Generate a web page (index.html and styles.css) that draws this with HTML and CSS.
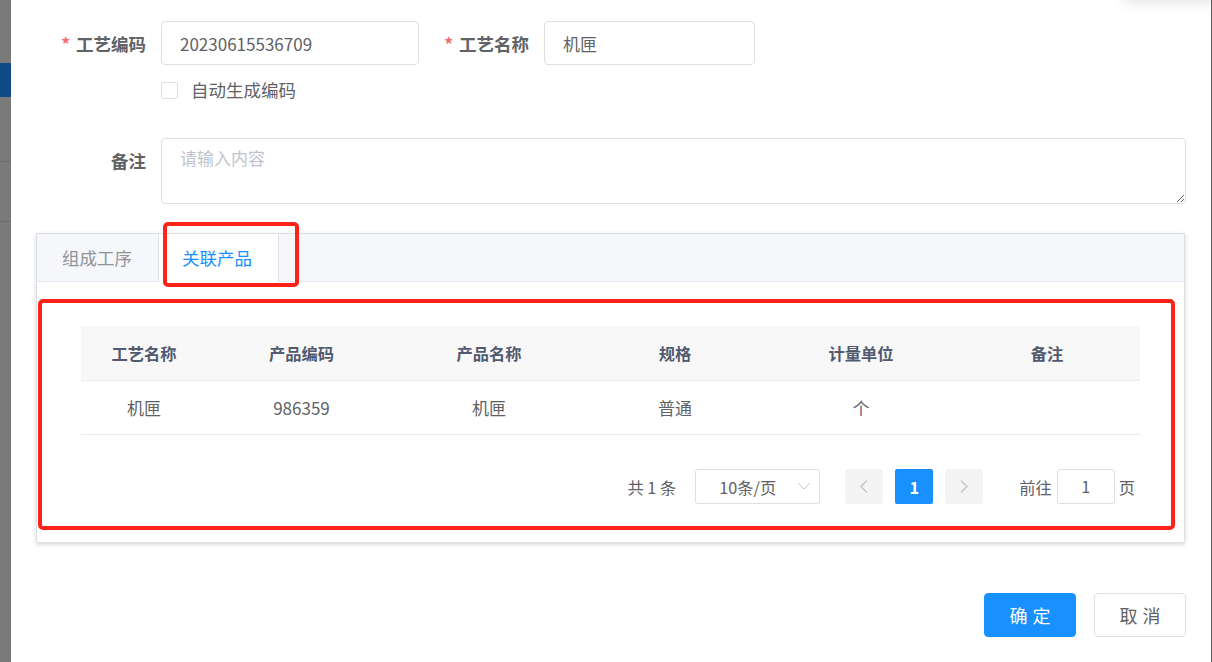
FILE: index.html
```html
<!DOCTYPE html>
<html lang="zh-CN">
<head>
<meta charset="utf-8">
<title>工艺</title>
<link rel="stylesheet" href="styles.css">
</head>
<body>
<div class="page">
  <aside class="backdrop">
    <div class="bd-top"></div>
    <div class="bd-active"></div>
    <div class="bd-mid"></div>
    <div class="bd-mid2"></div>
    <div class="bd-rest"></div>
  </aside>
  <main class="dialog">
    <div class="corner-shadow"></div>
    <div class="form">
      <div class="row row-top">
        <div class="item item-code">
          <label class="label"><span class="req">*</span>工艺编码</label>
          <div class="control">
            <div class="input input-code">20230615536709</div>
            <div class="checkbox-row"><span class="checkbox"></span><span class="checkbox-text">自动生成编码</span></div>
          </div>
        </div>
        <div class="item item-name">
          <label class="label"><span class="req">*</span>工艺名称</label>
          <div class="control">
            <div class="input input-name">机匣</div>
          </div>
        </div>
      </div>
      <div class="row row-remark">
        <label class="label">备注</label>
        <textarea class="textarea" placeholder="请输入内容"></textarea>
      </div>
    </div>

    <section class="tabs">
      <div class="tabs-header">
        <div class="tab">组成工序</div>
        <div class="tab active">关联产品</div>
      </div>
      <div class="tabs-body">
        <table class="grid">
          <colgroup>
            <col class="c1"><col class="c2"><col class="c3"><col class="c4"><col class="c5"><col class="c6">
          </colgroup>
          <thead>
            <tr><th>工艺名称</th><th>产品编码</th><th>产品名称</th><th>规格</th><th>计量单位</th><th>备注</th></tr>
          </thead>
          <tbody>
            <tr><td>机匣</td><td>986359</td><td>机匣</td><td>普通</td><td>个</td><td></td></tr>
          </tbody>
        </table>
        <div class="pager">
          <span class="pager-total">共 1 条</span>
          <div class="pager-size">
            <span>10条/页</span>
            <svg class="size-arrow" width="12" height="7" viewBox="0 0 12 7"><polyline points="0.5,0.5 6,6 11.5,0.5" fill="none" stroke="#c0c4cc" stroke-width="1"/></svg>
          </div>
          <button class="pg-btn" type="button"><svg width="8" height="13" viewBox="0 0 8 13"><polyline points="7,0.5 1,6.5 7,12.5" fill="none" stroke="#c0c4cc" stroke-width="1.4"/></svg></button>
          <button class="pg-num" type="button">1</button>
          <button class="pg-btn" type="button"><svg width="8" height="13" viewBox="0 0 8 13"><polyline points="1,0.5 7,6.5 1,12.5" fill="none" stroke="#c0c4cc" stroke-width="1.4"/></svg></button>
          <span class="pager-goto">前往</span>
          <div class="pager-input">1</div>
          <span class="pager-unit">页</span>
        </div>
      </div>
    </section>

    <div class="footer">
      <button class="btn btn-primary" type="button"><span>确定</span></button>
      <button class="btn" type="button"><span>取消</span></button>
    </div>

    <div class="mark mark-tab"></div>
    <div class="mark mark-table"></div>
  </main>
  <div class="edge"></div>
</div>
</body>
</html>
```

FILE: styles.css
```css
html, body {
  margin: 0;
  padding: 0;
}
body {
  width: 1212px;
  height: 662px;
  overflow: hidden;
  font-family: "Noto Sans CJK SC", "Noto Sans", sans-serif;
  color: #606266;
}
.page {
  display: flex;
  width: 1212px;
  height: 662px;
  background: #7a7a7a;
}

/* dimmed page behind the dialog */
.backdrop {
  width: 11px;
  flex: none;
  display: flex;
  flex-direction: column;
}
.bd-top { height: 63px; background: #7a7a7a; }
.bd-active { height: 34px; background: #0e4b84; }
.bd-mid { height: 64px; background: #7a7a7a; border-bottom: 1px solid #6d6d6d; }
.bd-mid2 { height: 59px; background: #7a7a7a; border-bottom: 1px solid #6d6d6d; }
.bd-rest { flex: 1; background: #7a7a7a; }
.edge {
  width: 1px;
  flex: none;
  background: #5e5e5e;
}

.dialog {
  position: relative;
  width: 1200px;
  flex: none;
  box-sizing: border-box;
  background: #fff;
  padding: 21px 25px 0 25px;
  overflow: hidden;
}
.corner-shadow {
  position: absolute;
  top: -30px;
  right: -4px;
  width: 90px;
  height: 30px;
  background: #fff;
  box-shadow: 0 2px 14px rgba(0, 0, 0, 0.13);
}

/* form */
.row {
  display: flex;
  align-items: flex-start;
}
.item {
  display: flex;
  align-items: flex-start;
}
.label {
  width: 125px;
  flex: none;
  box-sizing: border-box;
  padding-right: 15px;
  text-align: right;
  font-size: 17.5px;
  font-weight: bold;
  line-height: 46px;
  height: 44px;
  color: #606266;
}
.req {
  color: #f56c6c;
  margin-right: 6px;
  font-weight: bold;
}
.input {
  box-sizing: border-box;
  height: 44px;
  border: 1px solid #dcdfe6;
  border-radius: 4px;
  padding: 0 18px;
  font-size: 17px;
  line-height: 44px;
  color: #606266;
}
.input-code { width: 258px; }
.input-name { width: 211px; }
.checkbox-row {
  display: flex;
  align-items: center;
  margin-top: 17px;
  height: 17px;
}
.checkbox {
  box-sizing: border-box;
  width: 17px;
  height: 17px;
  border: 1px solid #dcdfe6;
  border-radius: 2px;
  background: #fff;
  margin-right: 13px;
}
.checkbox-text {
  font-size: 17.5px;
  line-height: 17px;
  color: #606266;
  position: relative;
  top: -1px;
}
.row-remark {
  margin-top: 39px;
}
.textarea {
  flex: 1;
  box-sizing: border-box;
  height: 66px;
  border: 1px solid #dcdfe6;
  border-radius: 4px;
  padding: 6px 18px;
  font-family: "Noto Sans CJK SC", "Noto Sans", sans-serif;
  font-size: 17px;
  line-height: 26px;
  color: #606266;
  resize: vertical;
  outline: none;
  margin: 0;
}
.textarea::placeholder {
  color: #c0c4cc;
}

/* tabs card */
.tabs {
  margin-top: 29px;
  width: 1149px;
  box-sizing: border-box;
  border: 1px solid #dcdfe6;
  box-shadow: 0 2px 4px 0 rgba(0, 0, 0, 0.12), 0 0 6px 0 rgba(0, 0, 0, 0.04);
  background: #fff;
}
.tabs-header {
  display: flex;
  height: 47px;
  background: #f5f7fa;
  border-bottom: 1px solid #e4e7ed;
}
.tab {
  height: 48px;
  box-sizing: border-box;
  padding: 0 25px;
  border-left: 1px solid transparent;
  border-right: 1px solid transparent;
  font-size: 17.5px;
  line-height: 47px;
  color: #909399;
}
.tab:first-child {
  margin-left: -1px;
}
.tab.active {
  padding: 0 26px 0 23px;
  background: #fff;
  color: #1890ff;
  border-left-color: #dcdfe6;
  border-right-color: #dcdfe6;
}
.tabs-body {
  padding: 44px 44px 38px 44px;
}

.grid {
  width: 100%;
  table-layout: fixed;
  border-collapse: collapse;
}
.c1 { width: 126px; }
.c2 { width: 189px; }
.c3, .c4, .c5, .c6 { width: 186px; }
.grid th {
  height: 54px;
  padding: 0;
  background: #f8f8f9;
  border-bottom: 1px solid #e8eaec;
  font-size: 16.25px;
  font-weight: bold;
  color: #515a6e;
  text-align: center;
}
.grid td {
  height: 53px;
  padding: 0;
  border-bottom: 1px solid #e8eaec;
  font-size: 17px;
  color: #606266;
  text-align: center;
}

.pager {
  margin-top: 34px;
  height: 35px;
  display: flex;
  align-items: center;
  justify-content: flex-end;
  padding-right: 5px;
  font-size: 16.25px;
  color: #606266;
}
.pager-total {
  margin-right: 19px;
}
.pager-size {
  box-sizing: border-box;
  width: 125px;
  height: 35px;
  border: 1px solid #dcdfe6;
  border-radius: 3px;
  display: flex;
  align-items: center;
  padding-left: 23px;
  padding-right: 9px;
  justify-content: space-between;
  margin-right: 25px;
  color: #606266;
}
.size-arrow {
  display: block;
}
.pg-btn, .pg-num {
  width: 38px;
  height: 35px;
  border: 0;
  border-radius: 2px;
  padding: 0;
  margin: 0 6px;
  display: flex;
  align-items: center;
  justify-content: center;
  font-family: inherit;
}
.pg-btn {
  background: #f4f4f5;
}
.pg-btn:first-of-type {
  margin-left: 0;
}
.pg-num {
  background: #1890ff;
  color: #fff;
  font-size: 16.25px;
  font-weight: bold;
}
.pager-goto {
  margin-left: 30px;
}
.pager-input {
  box-sizing: border-box;
  width: 58px;
  height: 35px;
  margin: 0 4px 0 5px;
  border: 1px solid #dcdfe6;
  border-radius: 3px;
  text-align: center;
  line-height: 33px;
  font-size: 16.25px;
}

/* footer */
.footer {
  margin-top: 50px;
  display: flex;
  justify-content: flex-end;
  gap: 18px;
}
.btn {
  width: 92px;
  height: 44px;
  box-sizing: border-box;
  border: 1px solid #dcdfe6;
  border-radius: 4px;
  background: #fff;
  color: #606266;
  font-family: "Noto Sans CJK SC", "Noto Sans", sans-serif;
  font-size: 18px;
  padding: 0;
  display: flex;
  align-items: center;
  justify-content: center;
}
.btn span {
  letter-spacing: 5px;
  margin-right: -5px;
}
.btn-primary {
  background: #1890ff;
  border-color: #1890ff;
  color: #fff;
}

/* red annotation rectangles */
.mark {
  position: absolute;
  box-sizing: border-box;
  border: 4px solid #ff2218;
  border-radius: 5px;
  pointer-events: none;
}
.mark-tab {
  left: 152px;
  top: 222px;
  width: 136px;
  height: 65px;
}
.mark-table {
  left: 27px;
  top: 299px;
  width: 1137px;
  height: 231px;
}
```
